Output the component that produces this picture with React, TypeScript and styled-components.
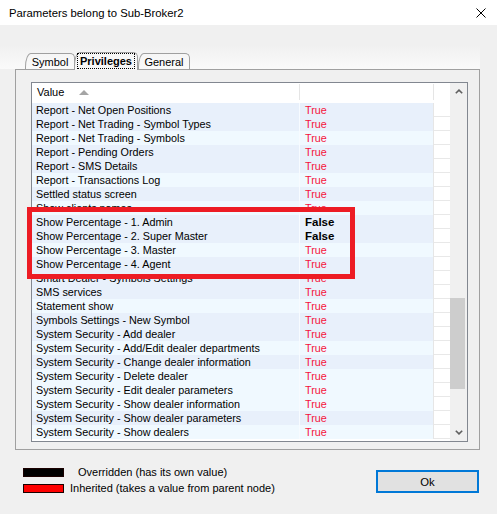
import React from 'react';
import styled, { createGlobalStyle } from 'styled-components';

const GlobalStyle = createGlobalStyle`
  html, body {
    margin: 0;
    padding: 0;
    background: #f0f0f0;
  }
  body {
    font-family: 'Liberation Sans', Arial, sans-serif;
    color: #000;
  }
`;

const Window = styled.div`
  position: relative;
  width: 497px;
  height: 514px;
  background: #f0f0f0;
  overflow: hidden;
`;

const TitleBar = styled.div`
  height: 25px;
  background: #fff;
  display: flex;
  align-items: center;
  justify-content: space-between;
  padding: 0 11px 0 9px;
  font-size: 11.3px;
`;

const CloseButton = styled.div`
  display: flex;
  width: 10px;
  height: 10px;
`;

const TabStrip = styled.div`
  width: 480px;
  height: 44px;
  box-sizing: border-box;
  padding-left: 25px;
  display: flex;
  align-items: flex-end;
  background: linear-gradient(to bottom, #f0f0f0 0, #f0f0f0 20px, #fafafa 44px);
`;

const Tab = styled.div<{ $width: number; $active?: boolean }>`
  position: relative;
  width: ${(p) => p.$width}px;
  height: ${(p) => (p.$active ? 18 : 16)}px;
  margin-left: ${(p) => (p.$active ? -1 : 0)}px;
  margin-bottom: ${(p) => (p.$active ? -1 : 0)}px;
  z-index: ${(p) => (p.$active ? 2 : 1)};
  box-sizing: border-box;
  border: 1px solid #a0a0a0;
  border-bottom: none;
  border-radius: 6px 5px 0 0 / 14px 5px 0 0;
  background: ${(p) => (p.$active ? '#f7f7f7' : 'linear-gradient(to bottom, #f6f6f6, #fafafa)')};
  display: flex;
  align-items: center;
  justify-content: center;
  font-size: 11px;
  font-weight: ${(p) => (p.$active ? 'bold' : 'normal')};
  padding-bottom: ${(p) => (p.$active ? 1 : 0)}px;
`;

const FocusLabel = styled.span`
  outline: 1px dotted #000;
  outline-offset: 1px;
  padding: 0 1px;
  line-height: 12px;
`;

const Panel = styled.div`
  position: relative;
  margin-left: 15px;
  width: 465px;
  height: 381px;
  box-sizing: border-box;
  border: 1px solid #a0a0a0;
  padding: 12px 0 0 15px;
  background: #f0f0f0;
`;

const Grid = styled.div`
  width: 437px;
  height: 360px;
  box-sizing: border-box;
  border: 1px solid #828790;
  display: flex;
  background: #fff;
`;

const GridMain = styled.div`
  width: 418px;
  display: flex;
  flex-direction: column;
  overflow: hidden;
`;

const HeaderRow = styled.div`
  height: 20px;
  flex-shrink: 0;
  display: grid;
  grid-template-columns: 268px 134px 16px;
  background: #fff;
  font-size: 11px;
`;

const HeaderCell = styled.div<{ $divider?: boolean }>`
  display: flex;
  align-items: center;
  padding-left: 5px;
  gap: 15px;
  box-sizing: border-box;
  border-right: ${(p) => (p.$divider ? '1px solid #e5e5e5' : 'none')};
  margin: 1px 0 3px;
`;

const SortArrow = styled.span`
  width: 0;
  height: 0;
  border-left: 5px solid transparent;
  border-right: 5px solid transparent;
  border-bottom: 5px solid #a5a5a5;
`;

const Row = styled.div`
  height: 14px;
  flex-shrink: 0;
  display: grid;
  grid-template-columns: 268px 134px 16px;
  font-size: 10.8px;
  line-height: 13px;
`;

const NameCell = styled.div<{ $shade: Shade }>`
  background: ${(p) => (p.$shade === 'b' ? '#e8f0fb' : '#f0f9ff')};
  border-right: 1px solid #f7fbff;
  padding: 1px 0 0 4px;
  white-space: nowrap;
  overflow: hidden;
`;

const ValueCell = styled.div<{ $shade: Shade; $own: boolean }>`
  background: ${(p) => (p.$shade === 'b' ? '#e8f0fb' : '#f0f9ff')};
  border-right: 1px solid #e6e6e6;
  padding: 1px 0 0 5px;
  color: ${(p) => (p.$own ? '#000' : '#f5143c')};
  font-weight: ${(p) => (p.$own ? 'bold' : 'normal')};
  font-size: ${(p) => (p.$own ? '11.5px' : '10.8px')};
`;

const FillerCell = styled.div`
  background: #fff;
  box-sizing: border-box;
  border-bottom: 1px solid #e8e8e8;
`;

const ScrollBar = styled.div`
  width: 17px;
  display: flex;
  flex-direction: column;
  background: #f0f0f0;
`;

const ScrollButton = styled.div`
  height: 17px;
  flex-shrink: 0;
  display: flex;
  align-items: center;
  justify-content: center;
`;

const ScrollTrack = styled.div`
  flex: 1;
  display: flex;
  flex-direction: column;
`;

const ScrollThumb = styled.div<{ $offset: number; $size: number }>`
  margin-top: ${(p) => p.$offset}px;
  height: ${(p) => p.$size}px;
  width: 15px;
  background: #cdcdcd;
`;

const Highlight = styled.div`
  position: absolute;
  left: 27px;
  top: 207px;
  width: 328px;
  height: 72px;
  box-sizing: border-box;
  border: 5px solid #ed1c24;
  pointer-events: none;
`;

const Footer = styled.div`
  display: flex;
  justify-content: space-between;
  align-items: flex-start;
  padding: 14px 18px 0 23px;
`;

const Legend = styled.div`
  display: flex;
  flex-direction: column;
`;

const LegendRow = styled.div<{ $gap: number }>`
  height: 16px;
  display: flex;
  align-items: center;
  gap: ${(p) => p.$gap}px;
  font-size: 11px;
`;

const Swatch = styled.span<{ $color: string }>`
  width: 41px;
  height: 9px;
  box-sizing: border-box;
  background: ${(p) => p.$color};
  border: 1px solid #1a0000;
`;

const OkButton = styled.button`
  margin-top: 6px;
  width: 103px;
  height: 23px;
  box-sizing: border-box;
  border: 2px solid #0078d7;
  background: #e1e1e1;
  font-family: 'Liberation Sans', Arial, sans-serif;
  font-size: 11.3px;
  color: #000;
  padding: 0;
`;

type Shade = 'b' | 'l';

const rows: [string, string, Shade][] = [
  ['Report - Net Open Positions', 'True', 'b'],
  ['Report - Net Trading - Symbol Types', 'True', 'b'],
  ['Report - Net Trading - Symbols', 'True', 'l'],
  ['Report - Pending Orders', 'True', 'b'],
  ['Report - SMS Details', 'True', 'b'],
  ['Report - Transactions Log', 'True', 'l'],
  ['Settled status screen', 'True', 'b'],
  ['Show clients names', 'True', 'l'],
  ['Show Percentage - 1. Admin', 'False', 'b'],
  ['Show Percentage - 2. Super Master', 'False', 'b'],
  ['Show Percentage - 3. Master', 'True', 'l'],
  ['Show Percentage - 4. Agent', 'True', 'b'],
  ['Smart Dealer - Symbols Settings', 'True', 'b'],
  ['SMS services', 'True', 'b'],
  ['Statement show', 'True', 'l'],
  ['Symbols Settings - New Symbol', 'True', 'b'],
  ['System Security - Add dealer', 'True', 'b'],
  ['System Security - Add/Edit dealer departments', 'True', 'l'],
  ['System Security - Change dealer information', 'True', 'b'],
  ['System Security - Delete dealer', 'True', 'l'],
  ['System Security - Edit dealer parameters', 'True', 'l'],
  ['System Security - Show dealer information', 'True', 'l'],
  ['System Security - Show dealer parameters', 'True', 'b'],
  ['System Security - Show dealers', 'True', 'l'],
];

const Chevron = ({ dir }: { dir: 'up' | 'down' }) => (
  <svg width="8" height="5" viewBox="0 0 8 5">
    <path
      d={dir === 'up' ? 'M0.8 4.3 L4 1.1 L7.2 4.3' : 'M0.8 0.7 L4 3.9 L7.2 0.7'}
      fill="none"
      stroke="#606060"
      strokeWidth="1.6"
    />
  </svg>
);

const App = () => (
  <Window>
    <GlobalStyle />
    <TitleBar>
      <span>Parameters belong to Sub-Broker2</span>
      <CloseButton>
        <svg width="10" height="10" viewBox="0 0 10 10">
          <path d="M0.5 0.5 L9.5 9.5 M9.5 0.5 L0.5 9.5" stroke="#000" strokeWidth="1" />
        </svg>
      </CloseButton>
    </TitleBar>

    <TabStrip>
      <Tab $width={50}>Symbol</Tab>
      <Tab $width={64} $active>
        <FocusLabel>Privileges</FocusLabel>
      </Tab>
      <Tab $width={52}>General</Tab>
    </TabStrip>

    <Panel>
      <Grid>
        <GridMain>
          <HeaderRow>
            <HeaderCell $divider>
              Value
              <SortArrow />
            </HeaderCell>
            <HeaderCell $divider />
            <HeaderCell />
          </HeaderRow>
          {rows.map(([name, value, shade]) => (
            <Row key={name}>
              <NameCell $shade={shade}>{name}</NameCell>
              <ValueCell $shade={shade} $own={value === 'False'}>
                {value}
              </ValueCell>
              <FillerCell />
            </Row>
          ))}
        </GridMain>
        <ScrollBar>
          <ScrollButton>
            <Chevron dir="up" />
          </ScrollButton>
          <ScrollTrack>
            <ScrollThumb $offset={198} $size={91} />
          </ScrollTrack>
          <ScrollButton>
            <Chevron dir="down" />
          </ScrollButton>
        </ScrollBar>
      </Grid>
    </Panel>

    <Footer>
      <Legend>
        <LegendRow $gap={14}>
          <Swatch $color="#000" />
          Overridden (has its own value)
        </LegendRow>
        <LegendRow $gap={6}>
          <Swatch $color="#ff0000" />
          Inherited (takes a value from parent node)
        </LegendRow>
      </Legend>
      <OkButton>Ok</OkButton>
    </Footer>

    <Highlight />
  </Window>
);

export default App;
